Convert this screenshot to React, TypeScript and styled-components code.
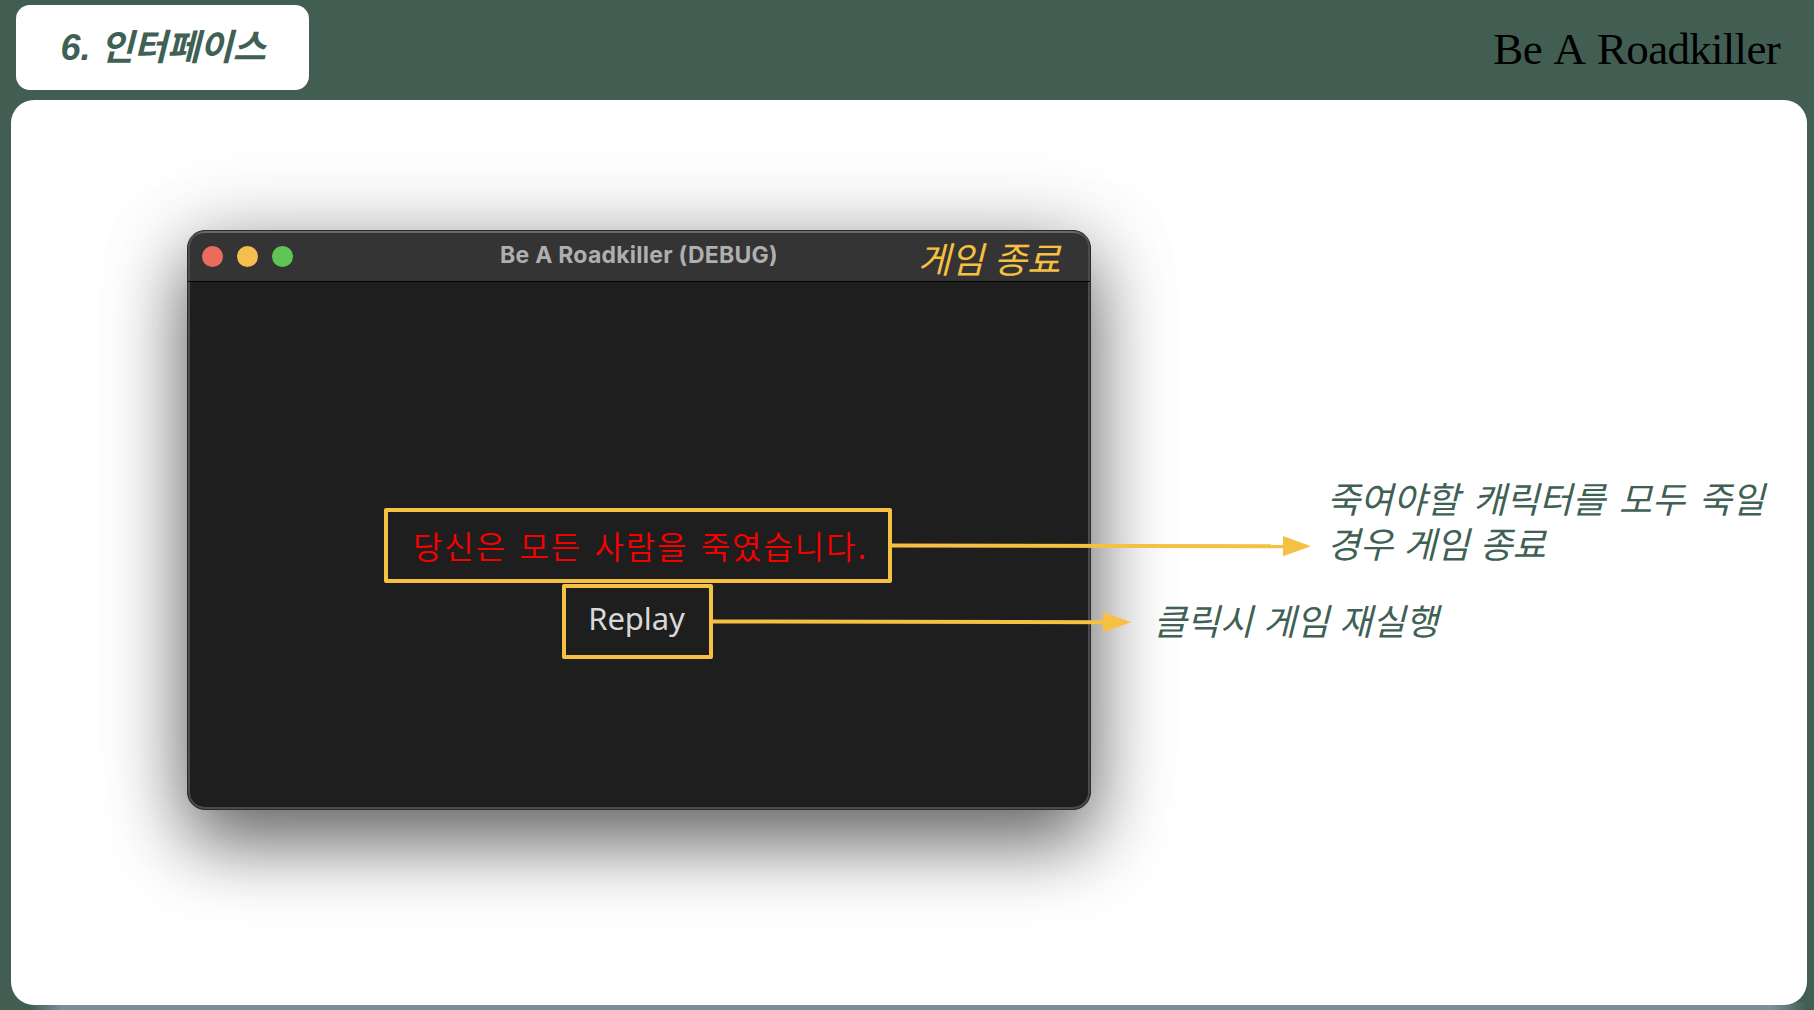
import React from "react";
import styled, { createGlobalStyle } from "styled-components";

const green = "#3f6054";
const amber = "#f6c142";
const korean = `"Liberation Sans", "Noto Sans CJK KR", sans-serif`;

const GlobalStyle = createGlobalStyle`
  *, *::before, *::after { box-sizing: border-box; }
  body { margin: 0; }
`;

const Slide = styled.div`
  width: 1814px;
  height: 1010px;
  overflow: hidden;
  display: flex;
  flex-direction: column;
  background:
    linear-gradient(90deg, transparent 30px, #7d8f9b 62px, #7d8f9b 1772px, transparent 1806px) 0 100% / 100% 8px no-repeat,
    #425e53;
`;

const Header = styled.header`
  height: 100px;
  flex: none;
  display: flex;
  justify-content: space-between;
  align-items: flex-start;
  padding: 5px 34px 0 15.5px;
`;

const SectionTag = styled.div`
  width: 293px;
  height: 85px;
  border-radius: 14px;
  background: #fff;
  display: flex;
  align-items: center;
  padding-left: 45px;
`;

const SectionTitle = styled.h1`
  margin: 0;
  font: italic 700 36px/1 ${korean};
  letter-spacing: -0.1px;
  word-spacing: 0.5px;
  white-space: pre;
  color: ${green};
`;

const Brand = styled.div`
  padding-top: 17px;
  font: 400 45px/54px "Liberation Serif", serif;
  letter-spacing: -0.7px;
  word-spacing: 3.6px;
  white-space: nowrap;
  color: #000;
`;

const Panel = styled.main`
  margin: 0 7px 0 11px;
  height: 904.5px;
  flex: none;
  border-radius: 23px;
  background: #fff;
  padding: 130px 0 0 176px;
`;

const GameWindow = styled.section`
  width: 904px;
  height: 580px;
  display: flex;
  flex-direction: column;
  border-radius: 18px;
  border: 1px solid #2b2b2b;
  background: #1e1e1e;
  box-shadow: inset 0 0 0 2px #4b4b4b, 0 33px 74px rgba(0, 0, 0, 0.56), 0 0 90px rgba(0, 0, 0, 0.17);
`;

const TitleBar = styled.div`
  height: 51px;
  flex: none;
  display: grid;
  grid-template-columns: 1fr auto 1fr;
  align-items: center;
  padding: 0 14px;
  border-radius: 17px 17px 0 0;
  border-bottom: 1px solid #050505;
  background: #343434;
  box-shadow: inset 2px 0 #4b4b4b, inset -2px 0 #4b4b4b, inset 0 2px #6a6a6a;
`;

const Lights = styled.div`
  display: flex;
  gap: 13.8px;
  padding-bottom: 1px;
`;

const Light = styled.span<{ $color: string }>`
  width: 21.3px;
  height: 21.3px;
  border-radius: 50%;
  background: ${(p) => p.$color};
`;

const WindowTitle = styled.div`
  padding-bottom: 4px;
  font: 700 23px/30px Inter, sans-serif;
  letter-spacing: 0.25px;
  color: #afafaf;
  white-space: nowrap;
`;

const Note = styled.div<{ $color: string; $wordSpacing?: number }>`
  font: italic 400 36px/45px ${korean};
  color: ${(p) => p.$color};
  word-spacing: ${(p) => p.$wordSpacing ?? 0}px;
  white-space: nowrap;
`;

const StateNote = styled(Note)`
  justify-self: end;
  padding: 7px 16px 0 0;
`;

const Screen = styled.div`
  flex: 1;
  display: flex;
  flex-direction: column;
  align-items: center;
  padding: 226px 2px 0 0;
  gap: 1px;
`;

const Marked = styled.div<{ $width: number; $shift?: number }>`
  position: relative;
  width: ${(p) => p.$width}px;
  height: 75px;
  margin-right: ${(p) => p.$shift ?? 0}px;
  border: 4px solid ${amber};
  border-radius: 2px;
  display: flex;
  justify-content: center;
  align-items: center;
`;

const Message = styled.p`
  margin: 0 0 2px;
  padding-left: 5px;
  font: 350 32px/40px "Noto Sans CJK KR", sans-serif;
  letter-spacing: 1.9px;
  word-spacing: 3.3px;
  white-space: nowrap;
  color: #f80000;
`;

const Replay = styled.button`
  margin: 0 1px 8px 0;
  padding: 0;
  border: 0;
  background: none;
  font: 400 31px/40px "Noto Sans", sans-serif;
  letter-spacing: -0.1px;
  color: #d8d8d8;
`;

const Callout = styled.div<{ $gap: number; $top: number }>`
  position: absolute;
  left: calc(100% + 3px);
  top: ${(p) => p.$top}px;
  display: flex;
  align-items: flex-start;
  gap: ${(p) => p.$gap}px;
`;

const ArrowSvg = styled.svg<{ $offset: number }>`
  flex: none;
  display: block;
  margin-top: ${(p) => p.$offset}px;
`;

function Arrow({ length, offset }: { length: number; offset: number }) {
  const neck = length - 28;
  return (
    <ArrowSvg $offset={offset} width={length} height={22} viewBox={`0 0 ${length} 22`}>
      <path d={`M0 10.5L${neck + 2} 11.2`} stroke={amber} strokeWidth={4} />
      <path d={`M${neck} 1L${length} 11.2L${neck} 21.2Z`} fill={amber} />
    </ArrowSvg>
  );
}

export default function App() {
  return (
    <Slide>
      <GlobalStyle />
      <Header>
        <SectionTag>
          <SectionTitle>6. 인터페이스</SectionTitle>
        </SectionTag>
        <Brand>Be A Roadkiller</Brand>
      </Header>
      <Panel>
        <GameWindow>
          <TitleBar>
            <Lights>
              <Light $color="#ed6a5f" />
              <Light $color="#f5bf4f" />
              <Light $color="#61c555" />
            </Lights>
            <WindowTitle>Be A Roadkiller (DEBUG)</WindowTitle>
            <StateNote $color={amber}>게임 종료</StateNote>
          </TitleBar>
          <Screen>
            <Marked $width={508}>
              <Message>당신은 모든 사람을 죽였습니다.</Message>
              <Callout $gap={16} $top={-34}>
                <Arrow length={420} offset={57} />
                <div>
                  <Note $color={green} $wordSpacing={3.4}>죽여야할 캐릭터를 모두 죽일</Note>
                  <Note $color={green}>경우 게임 종료</Note>
                </div>
              </Callout>
            </Marked>
            <Marked $width={151} $shift={2}>
              <Replay>Replay</Replay>
              <Callout $gap={23} $top={12}>
                <Arrow length={419} offset={11} />
                <Note $color={green}>클릭시 게임 재실행</Note>
              </Callout>
            </Marked>
          </Screen>
        </GameWindow>
      </Panel>
    </Slide>
  );
}
